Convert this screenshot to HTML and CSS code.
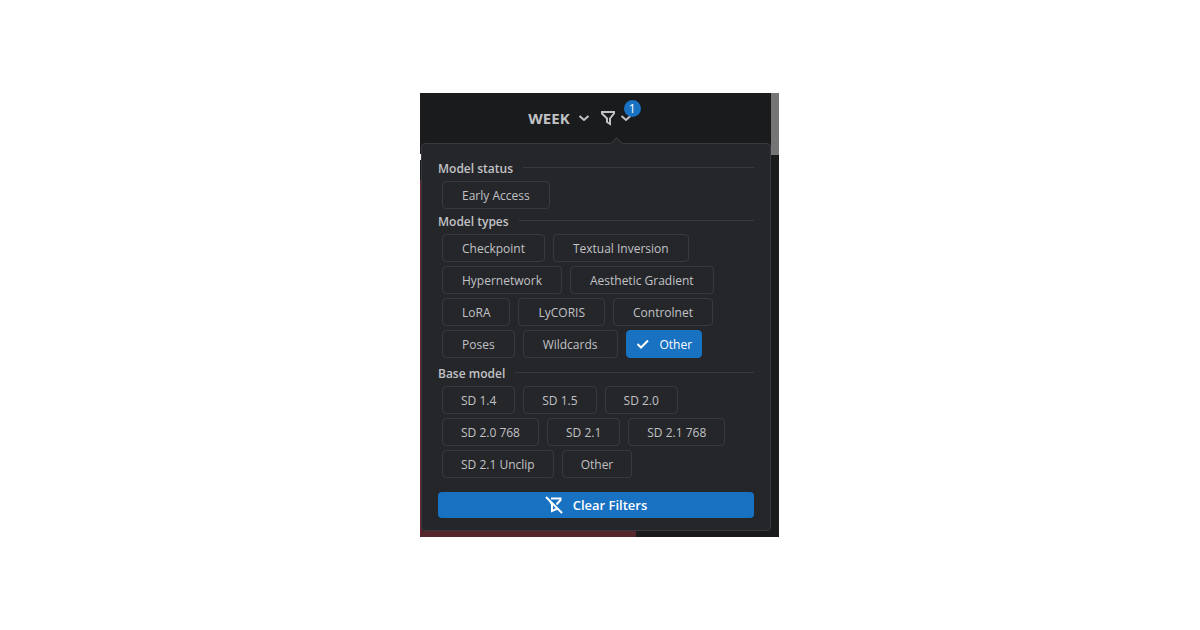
FILE: index.html
```html
<!DOCTYPE html>
<html lang="en">
    <head>
        <meta charset="UTF-8">
        <title>Model filters</title>
        <link rel="stylesheet" href="styles.css">
    </head>
    <body>
        <main class="window">
            <div class="content">
                <header class="toolbar">
                    <button class="period" type="button">
                        WEEK
                        <svg class="chevron" viewBox="0 0 12 12"><path d="M1.500 4l4.500 4 4.500-4"/></svg>
                    </button>
                    <button class="filter" type="button" aria-label="Filters">
                        <svg class="funnel" viewBox="0 0 16 16"><path d="M2 2h12v1.500l-4 5v5.500l-3-2v-3.500l-5-5z"/></svg>
                        <svg class="chevron" viewBox="0 0 12 12"><path d="M1.500 4l4.500 4 4.500-4"/></svg>
                        <span class="badge">1</span>
                    </button>
                </header>
                <form class="popover">
                    <h2>Model status</h2>
                    <div class="chips">
                        <label class="chip"><input type="checkbox">Early Access</label>
                    </div>
                    <h2>Model types</h2>
                    <div class="chips types">
                        <label class="chip"><input type="checkbox">Checkpoint</label>
                        <label class="chip"><input type="checkbox">Textual Inversion</label>
                        <label class="chip"><input type="checkbox">Hypernetwork</label>
                        <label class="chip"><input type="checkbox">Aesthetic Gradient</label>
                        <label class="chip"><input type="checkbox">LoRA</label>
                        <label class="chip"><input type="checkbox">LyCORIS</label>
                        <label class="chip"><input type="checkbox">Controlnet</label>
                        <label class="chip"><input type="checkbox">Poses</label>
                        <label class="chip"><input type="checkbox">Wildcards</label>
                        <label class="chip checked">
                            <input type="checkbox" checked>
                            <svg class="check" viewBox="0 0 14 12"><path d="M1.500 6l3.500 3.500 7-7"/></svg>
                            Other
                        </label>
                    </div>
                    <h2>Base model</h2>
                    <div class="chips base">
                        <label class="chip"><input type="checkbox">SD 1.4</label>
                        <label class="chip"><input type="checkbox">SD 1.5</label>
                        <label class="chip"><input type="checkbox">SD 2.0</label>
                        <label class="chip"><input type="checkbox">SD 2.0 768</label>
                        <label class="chip"><input type="checkbox">SD 2.1</label>
                        <label class="chip"><input type="checkbox">SD 2.1 768</label>
                        <label class="chip"><input type="checkbox">SD 2.1 Unclip</label>
                        <label class="chip"><input type="checkbox">Other</label>
                    </div>
                    <button class="clear" type="reset">
                        <svg class="funnel-off" viewBox="0 0 18 18"><path d="M1 1l16 16M6 2.500h9.500v1.500l-4 4.500M4.500 4.500l2.500 4v6.500l4.500-2v-2"/></svg>
                        Clear Filters
                    </button>
                </form>
            </div>
            <div class="scrollbar"><div class="thumb"></div></div>
        </main>
    </body>
</html>
```

FILE: styles.css
```css
* {
    box-sizing: border-box;
}
body {
    margin: 0;
    padding-right: 1px;
    min-height: 100vh;
    display: flex;
    align-items: center;
    justify-content: center;
    background: #fff;
    color: #c1c2c5;
    font-family: "Open Sans", "Noto Sans", sans-serif;
    font-size: 12px;
}
button {
    border: 0;
    padding: 0;
    background: none;
    color: inherit;
    font-family: inherit;
    cursor: pointer;
}
svg {
    fill: none;
    stroke: currentColor;
    stroke-width: 2;
    flex: none;
}
.window {
    display: flex;
    width: 100%;
    max-width: 359px;
    background: #1a1b1d;
}
/* a bit of the cards behind shows on the left and under the popover */
.content {
    flex: 1;
    padding-bottom: 6px;
    background:
        linear-gradient(#54282d, #54282d) 0 100% / 216px 6px no-repeat,
        linear-gradient(#1a1b1d 61px, #fff 61px, #fff 67px, #1a1b1d 67px, #1a1b1d 87px, #6d252d 87px) 0 0 / 2px 100% no-repeat;
}
.toolbar {
    display: flex;
    align-items: center;
    justify-content: center;
    gap: 10px;
    height: 50px;
    padding-right: 31px;
}
.period {
    display: flex;
    align-items: center;
    gap: 8px;
    font-size: 15px;
    font-weight: 700;
}
.filter {
    position: relative;
    display: flex;
    align-items: center;
    gap: 4px;
}
.chevron {
    width: 12px;
    height: 12px;
}
.funnel {
    width: 16px;
    height: 16px;
}
.badge {
    position: absolute;
    top: -10px;
    right: -9px;
    width: 17px;
    height: 17px;
    border-radius: 50%;
    background: #1971c2;
    color: #fff;
    font-size: 12px;
    line-height: 17px;
}
.popover {
    position: relative;
    margin-left: 1px;
    padding: 16px 16px 12px;
    border: 1px solid #373a40;
    border-radius: 4px;
    background: #25262a;
}
.popover::before {
    content: "";
    position: absolute;
    top: -5px;
    left: 190px;
    width: 8px;
    height: 8px;
    border: 1px solid #373a40;
    border-right: 0;
    border-bottom: 0;
    background: #25262a;
    transform: rotate(45deg);
}
h2 {
    display: flex;
    align-items: center;
    gap: 10px;
    margin: 0 0 4px;
    font-size: 12px;
    font-weight: 600;
    line-height: 17px;
}
h2::after {
    content: "";
    flex: 1;
    height: 1px;
    margin-bottom: 2px;
    background: #373a40;
}
.chips {
    display: flex;
    flex-wrap: wrap;
    gap: 4px 8px;
    margin-bottom: 4px;
    padding-left: 4px;
}
.types {
    margin-bottom: 7px;
}
.chip {
    display: flex;
    align-items: center;
    height: 28px;
    padding: 0 19px;
    border: 1px solid #373a40;
    border-radius: 4px;
    cursor: pointer;
}
.base .chip {
    padding: 0 18px;
}
.chip input {
    position: absolute;
    opacity: 0;
    margin: 0;
    pointer-events: none;
}
.checked {
    gap: 10px;
    padding: 0 9px;
    border-color: #1971c2;
    background: #1971c2;
    color: #fff;
}
.check {
    width: 14px;
    height: 12px;
}
.clear {
    display: flex;
    align-items: center;
    justify-content: center;
    gap: 10px;
    width: 100%;
    height: 26px;
    margin-top: 14px;
    border-radius: 4px;
    background: #1971c2;
    color: #fff;
    font-size: 13px;
    font-weight: 600;
}
.funnel-off {
    width: 18px;
    height: 18px;
}
.scrollbar {
    width: 8px;
    background: #1a1b1d;
}
.thumb {
    height: 62px;
    background: #757575;
}
```
